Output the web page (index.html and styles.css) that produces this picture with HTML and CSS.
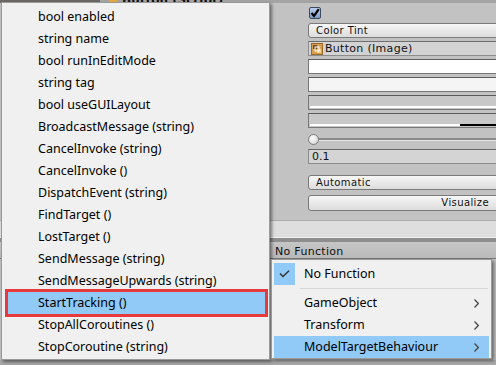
FILE: index.html
```html
<!DOCTYPE html>
<html>
<head>
  <title>Button OnClick</title>
  <link rel="stylesheet" href="styles.css">
</head>
<body>
  <div class="scene">
    <div class="inspector">
      <div class="comp-header">
        <span class="comp-icon"></span>
        <span class="comp-title">Button (Script)</span>
      </div>

      <div class="props">
        <div class="prop">
          <span class="toggle">
            <svg width="10" height="10" viewBox="0 0 10 10"><polyline points="1.5,5 4,8 8.8,1.2" fill="none" stroke="#000" stroke-width="2.2"/></svg>
          </span>
        </div>
        <div class="prop dropdown">Color Tint</div>
        <div class="prop object-field">
          <svg class="obj-icon" width="12" height="12" viewBox="0 0 12 12">
            <rect x="0.5" y="0.5" width="11" height="11" fill="#d9a04e" stroke="#9a6a2a"/>
            <rect x="2" y="2" width="4" height="4" fill="#6a4a22"/>
            <rect x="6" y="6" width="4" height="4" fill="#f4d08a"/>
            <rect x="4" y="4" width="4" height="4" fill="none" stroke="#fff" stroke-width="1"/>
          </svg>
          Button (Image)
        </div>
        <div class="prop color-field color-normal"></div>
        <div class="prop color-field color-high"></div>
        <div class="prop color-field color-pressed"><span class="alpha"></span></div>
        <div class="prop color-field color-pressed"><span class="alpha half"></span></div>
        <div class="prop slider">
          <span class="track"></span>
          <span class="thumb"></span>
        </div>
        <div class="prop number-field">0.1</div>
        <div class="prop dropdown spaced">Automatic</div>
        <div class="prop button">Visualize</div>
      </div>

      <div class="events-head"></div>
      <div class="event-row">No Function</div>
      <div class="event-rest"></div>
    </div>

    <div class="menu menu-methods">
      <div class="item">bool enabled</div>
      <div class="item">string name</div>
      <div class="item">bool runInEditMode</div>
      <div class="item">string tag</div>
      <div class="item">bool useGUILayout</div>
      <div class="item">BroadcastMessage (string)</div>
      <div class="item">CancelInvoke (string)</div>
      <div class="item">CancelInvoke ()</div>
      <div class="item">DispatchEvent (string)</div>
      <div class="item">FindTarget ()</div>
      <div class="item">LostTarget ()</div>
      <div class="item">SendMessage (string)</div>
      <div class="item">SendMessageUpwards (string)</div>
      <div class="item active marked">StartTracking ()</div>
      <div class="item">StopAllCoroutines ()</div>
      <div class="item">StopCoroutine (string)</div>
    </div>

    <div class="menu menu-targets">
      <div class="item checked">
        <span class="check">
          <svg width="11" height="8" viewBox="0 0 11 8"><polyline points="1,3.5 4,6.5 10,0.8" fill="none" stroke="#333" stroke-width="1.5"/></svg>
        </span>
        No Function
      </div>
      <div class="sep"></div>
      <div class="item sub">GameObject<svg class="arrow" width="5" height="9" viewBox="0 0 5 9"><polyline points="0.5,0.5 4.3,4.5 0.5,8.5" fill="none" stroke="#444" stroke-width="1.2"/></svg></div>
      <div class="item sub">Transform<svg class="arrow" width="5" height="9" viewBox="0 0 5 9"><polyline points="0.5,0.5 4.3,4.5 0.5,8.5" fill="none" stroke="#444" stroke-width="1.2"/></svg></div>
      <div class="item sub active">ModelTargetBehaviour<svg class="arrow" width="5" height="9" viewBox="0 0 5 9"><polyline points="0.5,0.5 4.3,4.5 0.5,8.5" fill="none" stroke="#444" stroke-width="1.2"/></svg></div>
    </div>
  </div>
</body>
</html>
```

FILE: styles.css
```css
body {
  margin: 0;
  background: #c2c2c2;
}
.scene {
  position: relative;
  width: 496px;
  height: 365px;
  overflow: hidden;
}

/* unity inspector behind the menus */
.inspector {
  display: flex;
  flex-direction: column;
  height: 365px;
  background: #c2c2c2;
  font-family: 'DejaVu Sans', sans-serif;
  font-size: 10px;
  color: #111;
}
.comp-header {
  height: 3px;
  display: flex;
  align-items: flex-end;
  gap: 4px;
  padding-left: 108px;
  background: linear-gradient(90deg, #6a6866 0 100px, #a4a4a4 100px);
  overflow: hidden;
}
.comp-icon {
  width: 10px;
  height: 10px;
  border-radius: 50%;
  background: #e9a93b;
  flex: none;
}
.comp-title {
  font-weight: bold;
  font-size: 12px;
  line-height: 6px;
}
.props {
  display: flex;
  flex-direction: column;
  gap: 3px;
  padding: 2px 0 0 308px;
  margin-right: -4px;
}
.prop {
  height: 15px;
  box-sizing: border-box;
}
.toggle {
  display: flex;
  align-items: center;
  justify-content: center;
  width: 12px;
  height: 12px;
  margin: 2px 0 0 1px;
  box-sizing: border-box;
  border: 1px solid #3c4a5e;
  border-radius: 2px;
  background: linear-gradient(#b9cdea, #7f9dc8);
}
.dropdown, .button {
  border: 1px solid #7a7a7a;
  border-radius: 3px;
  background: linear-gradient(#f7f7f7, #dcdcdc);
  padding-left: 7px;
  line-height: 13px;
  letter-spacing: 0.4px;
}
.dropdown.spaced {
  margin-top: 8px;
}
.button {
  height: 16px;
  margin-top: 2px;
  text-align: right;
  padding-right: 10px;
  line-height: 14px;
}
.object-field {
  display: flex;
  align-items: center;
  gap: 2px;
  border: 1px solid #8c8c8c;
  border-top-color: #6e6e6e;
  background: #d3d3d3;
  padding-left: 2px;
  font-size: 11px;
  letter-spacing: 0.3px;
}
.color-field {
  position: relative;
  border: 1px solid #777;
  border-top-color: #5c5c5c;
}
.color-normal { background: #fff; }
.color-high { background: #f5f5f5; }
.color-pressed { background: #c8c8c8; }
.alpha {
  position: absolute;
  left: 1px;
  right: 0;
  bottom: 1px;
  height: 2px;
  background: #fff;
}
.alpha.half {
  background: linear-gradient(90deg, #fff 0 150px, #000 150px);
}
.slider {
  position: relative;
}
.track {
  position: absolute;
  left: 2px;
  right: 0;
  top: 7px;
  height: 2px;
  background: #8a8a8a;
  border-bottom: 1px solid #e6e6e6;
}
.thumb {
  position: absolute;
  left: 0;
  top: 3px;
  width: 9px;
  height: 9px;
  border-radius: 50%;
  border: 1px solid #7c7c7c;
  background: radial-gradient(circle at 40% 35%, #fdfdfd, #cfcfcf);
}
.number-field {
  border: 1px solid #8a8a8a;
  border-top-color: #666;
  background: #d4d4d4;
  padding-left: 3px;
  line-height: 13px;
  font-size: 11px;
}
.events-head {
  margin-top: 9px;
  height: 18px;
  background: #dedede;
  border-top: 1px solid #acacac;
  border-bottom: 1px solid #f2f2f2;
  box-sizing: border-box;
}
.event-row {
  height: 21px;
  box-sizing: border-box;
  border-top: 4px solid #8e8e8e;
  border-bottom: 1px solid #777;
  background: linear-gradient(#c6c6c6, #b9b9b9);
  padding: 3px 0 0 275px;
  line-height: 14px;
  font-size: 11px;
  letter-spacing: 0.3px;
  color: #101010;
}
.event-rest {
  flex: 1;
  background: #c0c0c0;
  border-bottom: 5px solid #a8a8a8;
}

/* windows popup menus */
.menu {
  position: absolute;
  background: #f0f0f0;
  border: 1px solid #9a9a9a;
  box-shadow: 2px 2px 3px rgba(0, 0, 0, 0.45);
  font-family: 'Noto Sans', sans-serif;
  font-size: 12.5px;
  color: #000;
  box-sizing: border-box;
}
.menu-methods {
  left: 1px;
  top: 2px;
  width: 269px;
  height: 358px;
  padding: 3px 0;
}
.menu .item {
  position: relative;
  height: 22px;
  line-height: 22px;
  margin: 0 2px;
  padding-left: 34px;
  white-space: nowrap;
}
.menu .item.active {
  background: #91c9f7;
}
.menu .item.marked {
  margin: 0 4px 0 6px;
  padding-left: 30px;
  outline: 3px solid #e8393c;
}
.menu-targets {
  left: 271px;
  top: 259px;
  width: 221px;
  height: 100px;
  padding: 3px 0 0;
}
.menu-targets .item {
  padding-left: 30px;
}
.check {
  position: absolute;
  left: 0;
  top: 0;
  width: 21px;
  height: 22px;
  display: flex;
  align-items: center;
  justify-content: center;
  background: #91c9f7;
}
.sep {
  height: 1px;
  margin: 3px 3px 3px 28px;
  background: #d7d7d7;
}
.arrow {
  position: absolute;
  right: 10px;
  top: 7px;
}
```
